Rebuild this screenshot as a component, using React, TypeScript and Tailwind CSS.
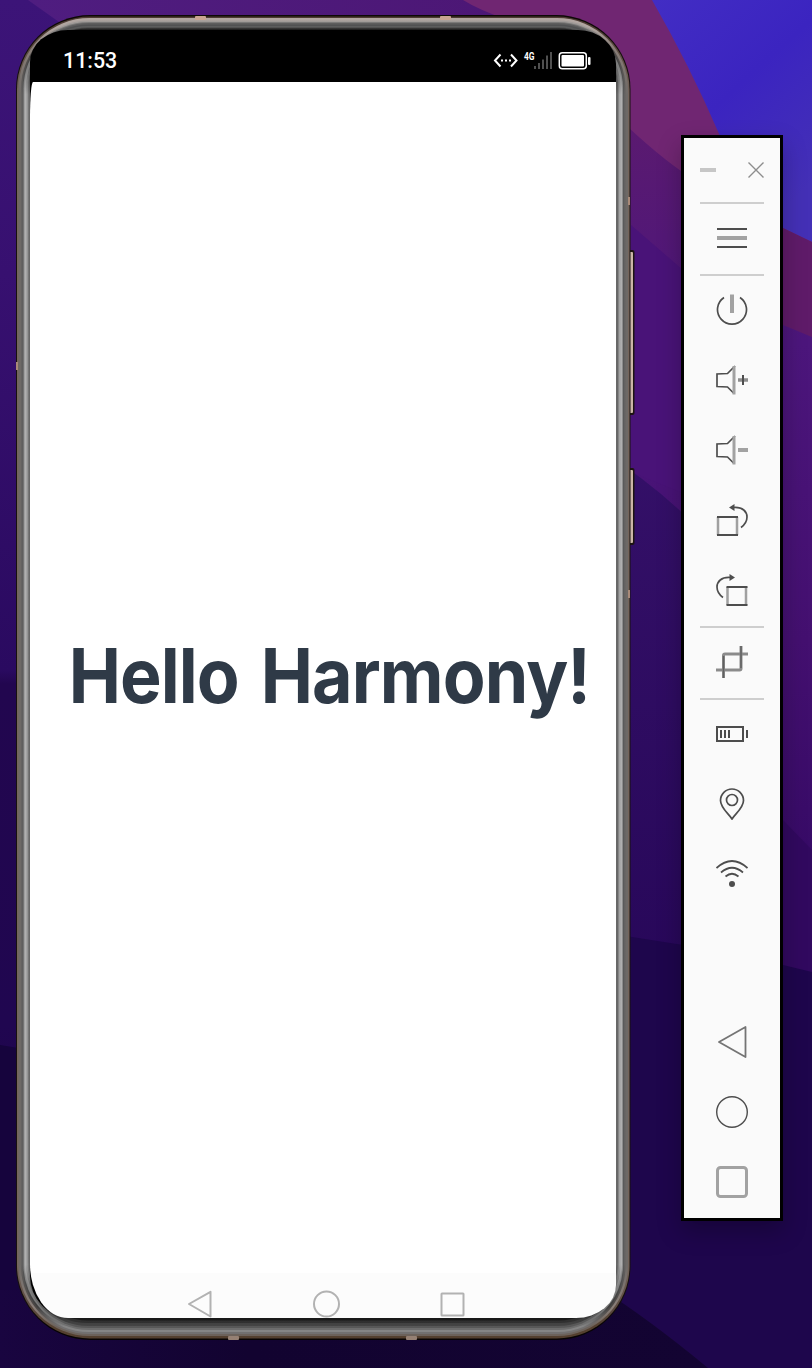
import React from "react";

function Wallpaper() {
  return (
    <svg className="absolute inset-0" width="812" height="1368" viewBox="0 0 812 1368" aria-hidden="true">
      <defs>
        <linearGradient id="wBase" x1="0" y1="0" x2="0" y2="1">
          <stop offset="0" stopColor="#3c1478" />
          <stop offset="0.2" stopColor="#371070" />
          <stop offset="0.49" stopColor="#2a0a60" />
          <stop offset="0.5" stopColor="#22064f" />
          <stop offset="0.75" stopColor="#200650" />
          <stop offset="1" stopColor="#180440" />
        </linearGradient>
        <linearGradient id="wTop" x1="0" y1="0" x2="1" y2="0">
          <stop offset="0" stopColor="#4f1d80" />
          <stop offset="1" stopColor="#4c1674" />
        </linearGradient>
        <linearGradient id="wBlue" x1="0" y1="0" x2="0.6" y2="1">
          <stop offset="0" stopColor="#422dc4" />
          <stop offset="0.5" stopColor="#3b24c0" />
          <stop offset="1" stopColor="#4430b6" />
        </linearGradient>
        <linearGradient id="wMid" gradientUnits="userSpaceOnUse" x1="0" y1="130" x2="0" y2="980">
          <stop offset="0" stopColor="#5a1a70" />
          <stop offset="0.25" stopColor="#4c167c" />
          <stop offset="0.6" stopColor="#441070" />
          <stop offset="1" stopColor="#300862" />
        </linearGradient>
        <linearGradient id="wDeep" x1="0" y1="0" x2="0" y2="1">
          <stop offset="0" stopColor="#341068" />
          <stop offset="1" stopColor="#270759" />
        </linearGradient>
        <linearGradient id="wFloor" x1="0" y1="0" x2="1" y2="0">
          <stop offset="0" stopColor="#190540" />
          <stop offset="0.35" stopColor="#120330" />
          <stop offset="1" stopColor="#130432" />
        </linearGradient>
      </defs>
      <rect width="812" height="1368" fill="url(#wBase)" />
      <path d="M28 0L90 44H560L520 0Z" fill="url(#wTop)" />
      <path d="M463 0Q482 12 520 24L600 100L812 320V0Z" fill="#702672" />
      <path d="M652 0Q690 66 720 136Q740 205 783 228L812 242V0Z" fill="url(#wBlue)" />
      <path d="M720 200L783 228L812 242V340L720 310Z" fill="#5f1b69" />
      <path d="M600 100Q650 150 684 173L783 325L812 337V1000H600Z" fill="url(#wMid)" />
      <path d="M631 225L683 270L700 500L631 472Z" fill="#491378" />
      <path d="M600 450Q655 484 700 530L783 820V1000H600Z" fill="url(#wDeep)" />
      <path d="M783 820L812 850V980H783Z" fill="#31095f" />
      <path d="M600 932L683 945L783 965L812 972V1368H600Z" fill="#1e064c" />
      <path d="M0 1045L60 1055V1368H0Z" fill="#16043d" />
      <path d="M0 1290L600 1288Q650 1320 708 1368H0Z" fill="url(#wFloor)" />
    </svg>
  );
}

type Ring = { i: number; t: string; s: string; b: string; c: string; it: number; ib: number };

const rings: Ring[] = [
  { i: 0, it: 0, ib: 0, t: "#0d0806", c: "#130e0c", s: "#17110f", b: "#070304" },
  { i: 1, it: 1.5, ib: 1.5, t: "#4d3b32", c: "#5c4a40", s: "#75655b", b: "#54402f" },
  { i: 2.5, it: 3, ib: 4, t: "#b1a6a1", c: "#8a7f79", s: "#6d6966", b: "#6c625b" },
  { i: 5, it: 5.5, ib: 6, t: "#a09b98", c: "#4a4644", s: "#646261", b: "#727070" },
  { i: 6.5, it: 7, ib: 8, t: "#7a7978", c: "#3c3c3c", s: "#5a5a5a", b: "#858585" },
  { i: 7.5, it: 8, ib: 10, t: "#5e5e5e", c: "#777777", s: "#8c8c8c", b: "#6d6d6d" },
  { i: 8.5, it: 9.5, ib: 12, t: "#505152", c: "#5b5b5b", s: "#b0b0b0", b: "#585858" },
  { i: 10, it: 11, ib: 14, t: "#5c5d5d", c: "#2c2c2c", s: "#a3a3a3", b: "#464646" },
  { i: 11.5, it: 12.5, ib: 17, t: "#454545", c: "#343434", s: "#858585", b: "#2e2e2e" },
  { i: 12.5, it: 13.5, ib: 19.5, t: "#222222", c: "#181818", s: "#686868", b: "#1a1a1a" },
];

function Frame() {
  return (
    <svg className="absolute inset-0" width="620" height="1325" viewBox="0 0 620 1325" aria-hidden="true">
      <defs>
        {rings.map((r, n) => (
          <linearGradient key={n} id={"ring" + n} gradientUnits="userSpaceOnUse" x1="0" y1="0" x2="0" y2="1325">
            <stop offset="0.009" stopColor={r.t} />
            <stop offset="0.024" stopColor={r.c} />
            <stop offset="0.06" stopColor={r.s} />
            <stop offset="0.943" stopColor={r.s} />
            <stop offset="0.975" stopColor={r.c} />
            <stop offset="0.99" stopColor={r.b} />
          </linearGradient>
        ))}
      </defs>
      <g fill="#1d1411">
        <rect x="612" y="235" width="6.500" height="165" rx="2" />
        <rect x="612" y="453" width="6.500" height="77" rx="2" />
      </g>
      <g fill="#cbb5a7">
        <rect x="613" y="237" width="4" height="161" rx="1" />
        <rect x="613" y="455" width="4" height="73" rx="1" />
      </g>
      {rings.map((r, n) => (
        <rect
          key={n}
          x={r.i}
          y={r.it}
          width={614.5 - 2 * r.i}
          height={1325 - r.it - r.ib}
          rx={74 - r.i * 1.2}
          ry={74 - r.i * 1.2}
          fill={"url(#ring" + n + ")"}
        />
      ))}
      <rect x="14" y="15" width="586" height="120" rx="46" fill="#000" />
      <rect x="14" y="1180" width="586" height="123" rx="42" fill="#000" />
      <g fill="#c9a591">
        <rect x="179" y="1" width="11" height="4" rx="1" />
        <rect x="424" y="1" width="11" height="4" rx="1" />
      </g>
      <g fill="#a98a78">
        <rect x="0" y="347" width="2" height="8" />
        <rect x="612" y="182" width="2" height="8" />
        <rect x="612" y="575" width="2" height="8" />
      </g>
      <g fill="#958073">
        <rect x="212" y="1321" width="11" height="4" rx="1" />
        <rect x="390" y="1321" width="11" height="4" rx="1" />
      </g>
    </svg>
  );
}

function StatusIcons() {
  return (
    <svg width="100" height="20" viewBox="0 0 100 20" fill="none" aria-hidden="true">
      <path d="M7.500 4.500L2 10.500L7.500 16.500M18 4.500L23.500 10.500L18 16.500" stroke="#fff" strokeWidth="2" />
      <path d="M8 9.500h2v2h-2zM12 9.500h2v2h-2zM16 9.500h2v2h-2z" fill="#fff" />
      <text x="31" y="10" fontSize="10.500" fontWeight="700" fill="#fff" fontFamily="Roboto, sans-serif" textLength="10.500" lengthAdjust="spacingAndGlyphs">4G</text>
      <path d="M41 16h2v3h-2zM45 13h2v6h-2zM49 9.500h2v9.500h-2zM53 5.500h2v13.500h-2zM57 2h2v17h-2z" fill="#505050" />
      <rect x="66.300" y="2.800" width="27" height="16" rx="3" stroke="#fff" strokeWidth="1.500" />
      <rect x="68.500" y="5" width="22.500" height="11.500" rx="1" fill="#fff" />
      <rect x="95" y="7" width="2.500" height="8" rx="1" fill="#fff" />
    </svg>
  );
}

function Phone() {
  return (
    <div className="relative ml-4 mt-[15px] h-[1325px] w-[620px] shrink-0 pl-3.5 pt-[15px]">
      <Frame />
      <div className="relative flex h-[1288px] w-[586px] flex-col overflow-hidden rounded-bl-[38px_54px] rounded-br-[40px_33px] rounded-tl-[38px_32px] rounded-tr-[38px_34px]">
        <div className="flex h-[52px] shrink-0 items-start justify-between bg-black pl-[33px] pr-[23px] pt-[20px]">
          <span className="-mt-px origin-left scale-x-95 font-['Roboto',sans-serif] text-[22.500px] leading-[22px] font-medium text-white">11:53</span>
          <StatusIcons />
        </div>
        <div className="flex flex-1 items-center justify-center rounded-tl-[3px_36px] bg-white pb-1.5 pl-3">
          <h1 className="scale-x-92 whitespace-nowrap font-['Inter',sans-serif] text-[76px] leading-[90px] font-[660] tracking-[-1px] [word-spacing:7px] text-[#2f3a47]">Hello Harmony!</h1>
        </div>
        <div className="flex h-[45px] shrink-0 justify-center bg-[#fcfcfc] pt-[17px] pl-[6px]">
          <svg width="280" height="28" viewBox="0 0 280 28" fill="none" stroke="#b2b2b2" strokeWidth="2" strokeLinejoin="round" aria-hidden="true">
            <path d="M3 14L24.500 1.800V26.500Z" />
            <circle cx="140.500" cy="14" r="12.500" />
            <rect x="255.500" y="3.500" width="22" height="22" rx="0.500" />
          </svg>
        </div>
      </div>
    </div>
  );
}

function Icon({ children }: { children: React.ReactNode }) {
  return (
    <button className="flex h-[70px] w-16 items-start justify-center pt-[18px]">
      <svg width="32" height="32" viewBox="0 0 32 32" fill="none" stroke="#4d4d4d" strokeWidth="1.700" aria-hidden="true">
        {children}
      </svg>
    </button>
  );
}

function Divider() {
  return <div className="h-0.5 w-16 shrink-0 bg-[#cecece]" />;
}

function Speaker() {
  return (
    <>
      <path d="M19 2L11.500 9.500L1 10V22.500L11.500 23L18 29.500" />
      <path d="M18 2V30.500" stroke="#a2a2a2" strokeWidth="3" />
    </>
  );
}

function Toolbar() {
  return (
    <aside className="relative ml-[45px] mt-[135px] flex h-[1086px] w-[102px] shrink-0 flex-col items-center border-[3px] border-black bg-[#fafafa] shadow-[0_10px_22px_rgba(0,0,0,0.25)]">
      <div className="flex h-16 w-16 shrink-0 items-center justify-between">
        <svg width="16" height="16" viewBox="0 0 16 16" aria-hidden="true"><path d="M0 6h16v4H0z" fill="#c6c6c6" /></svg>
        <svg width="16" height="16" viewBox="0 0 16 16" aria-hidden="true"><path d="M0.500 0.500L15.500 15.500M15.500 0.500L0.500 15.500" stroke="#8d8d8d" strokeWidth="1.400" /></svg>
      </div>
      <Divider />
      <Icon><path d="M1 7H31M1 25H31" strokeWidth="2" /><path d="M1 16H31" stroke="#a2a2a2" strokeWidth="4" /></Icon>
      <Divider />
      <Icon>
        <path d="M8 3.500A14.500 14.500 0 1 0 24 3.500" />
        <path d="M16 0.500V19" stroke="#a2a2a2" strokeWidth="4" />
      </Icon>
      <Icon><Speaker /><path d="M22 16H32" stroke="#8d8d8d" strokeWidth="3.500" /><path d="M27 11V21" strokeWidth="2" /></Icon>
      <Icon><Speaker /><path d="M22 16H32" stroke="#a2a2a2" strokeWidth="4" /></Icon>
      <Icon>
        <path d="M2 13V31M21 13V31" stroke="#a0a0a0" strokeWidth="2.500" />
        <path d="M1 13H22M1 31H22" strokeWidth="2" />
        <path d="M17 3.500C27 2.500 31 8 31 13Q31 19 25 23.500" />
        <path d="M13 3.500L18.500 0V7Z" fill="#4d4d4d" stroke="none" />
      </Icon>
      <Icon>
        <path d="M11.500 13V31M30 13V31" stroke="#a0a0a0" strokeWidth="2.500" />
        <path d="M10.500 13H31.500M10.500 31H31.500" strokeWidth="2" />
        <path d="M15 3.500C5 2.500 1 8 1 13Q1 19 7 23.500" />
        <path d="M19 3.500L13.500 0V7Z" fill="#4d4d4d" stroke="none" />
      </Icon>
      <Divider />
      <Icon>
        <path d="M7.500 32V9.500Q7.500 8 9 8H32M25 0V22.500Q25 24 23.500 24H0" stroke="#8b8b8b" strokeWidth="3" />
        <path d="M7.500 32V10M25 0V22" stroke="#606060" strokeWidth="1.500" />
      </Icon>
      <Divider />
      <Icon>
        <path d="M1 9H27V23H1Z" strokeWidth="2" />
        <path d="M5 12V20M9 12V20M13 12V20M31 12V20" strokeWidth="2" />
      </Icon>
      <Icon>
        <path d="M16 31C13 26 4.500 20 4.500 12.500A11.500 11.500 0 0 1 27.500 12.500C27.500 20 19 26 16 31Z" />
        <circle cx="16" cy="12" r="5.500" />
      </Icon>
      <Icon>
        <path d="M0.500 10Q16 -4 31.500 10M5 14.500Q16 5 27 14.500M9.500 18.500Q16 13 22.500 18.500" />
        <circle cx="16" cy="26" r="3" fill="#4d4d4d" stroke="none" />
      </Icon>
      <div className="mt-auto flex flex-col">
        <Icon><path d="M3 16L29.500 1V31Z" stroke="#747474" strokeWidth="1.800" strokeLinejoin="round" /></Icon>
        <Icon><circle cx="16" cy="16" r="15.300" strokeWidth="1.400" /></Icon>
        <Icon><rect x="1.500" y="1.500" width="29" height="29" rx="3" stroke="#a2a2a2" strokeWidth="3" /></Icon>
      </div>
    </aside>
  );
}

export default function App() {
  return (
    <main className="relative flex h-[1368px] w-[812px] items-start overflow-hidden bg-[#1e064c]">
      <Wallpaper />
      <Phone />
      <Toolbar />
    </main>
  );
}
